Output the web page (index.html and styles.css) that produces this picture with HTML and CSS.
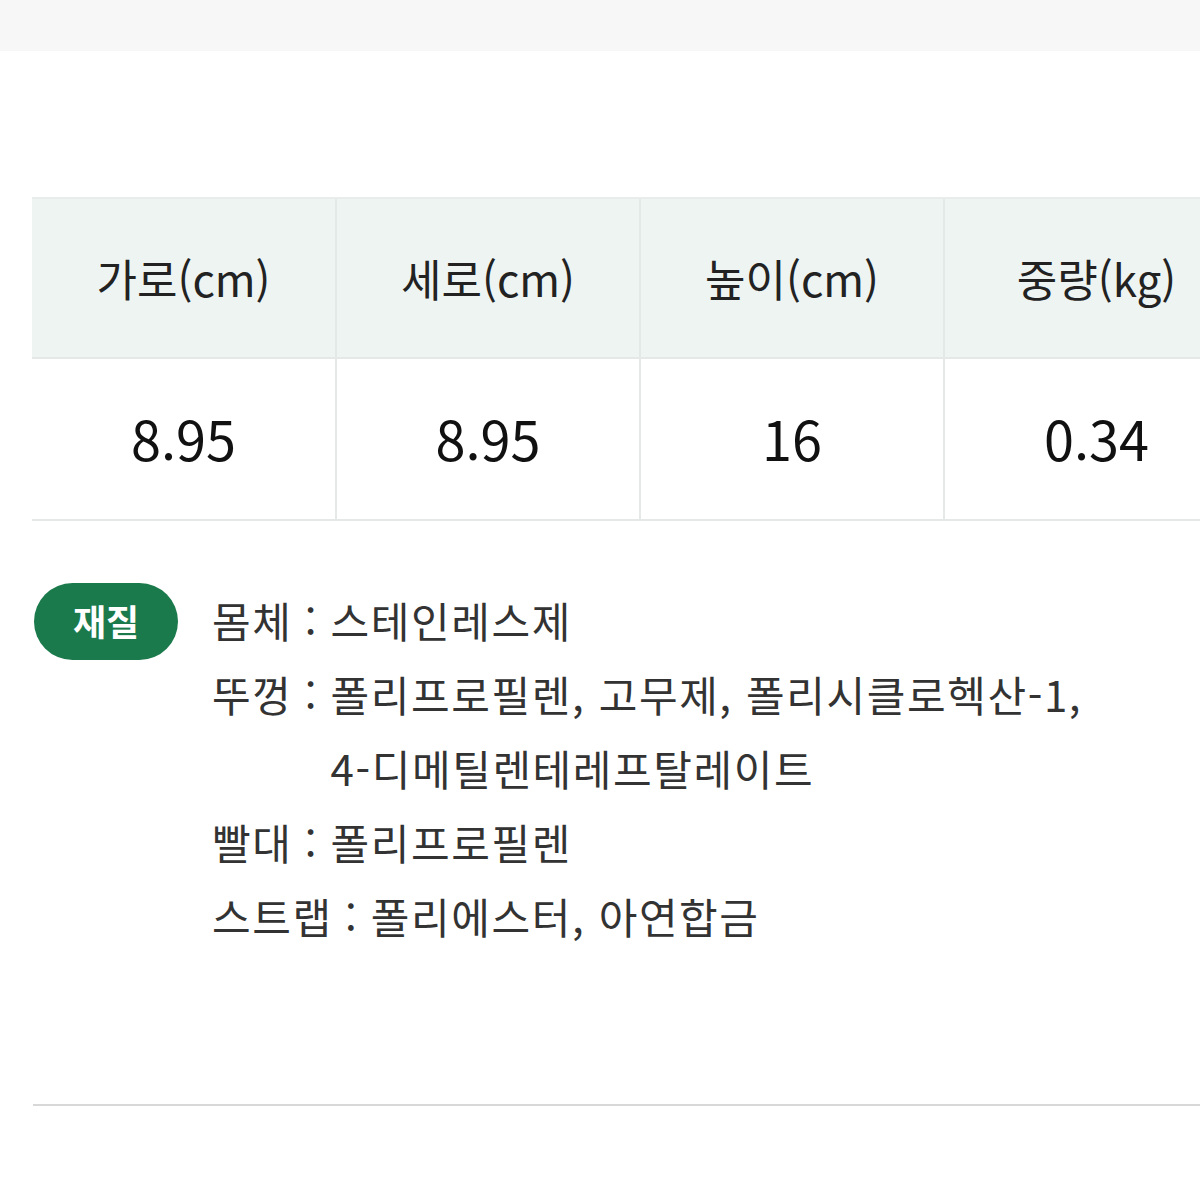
FILE: index.html
```html
<!doctype html>
<html lang="ko">
<head>
    <meta charset="UTF-8">
    <meta name="viewport" content="width=device-width, initial-scale=1.0">
    <title>제품 정보</title>
    <link rel="stylesheet" href="styles.css">
</head>
<body>

<div class="top_bar"></div>

<div class="spec">
    <table class="spec_table">
        <tr class="spec_head">
            <th>가로(cm)</th>
            <th>세로(cm)</th>
            <th>높이(cm)</th>
            <th>중량(kg)</th>
        </tr>
        <tr class="spec_body">
            <td>8.95</td>
            <td>8.95</td>
            <td>16</td>
            <td>0.34</td>
        </tr>
    </table>
</div>

<div class="material">
    <div class="material_badge">재질</div>
    <ul class="material_list">
        <li><span class="material_name">몸체 :&nbsp;</span><span>스테인레스제</span></li>
        <li><span class="material_name">뚜껑 :&nbsp;</span><span>폴리프로필렌, 고무제, 폴리시클로헥산-1,<br>4-디메틸렌테레프탈레이트</span></li>
        <li><span class="material_name">빨대 :&nbsp;</span><span>폴리프로필렌</span></li>
        <li><span class="material_name">스트랩 :&nbsp;</span><span>폴리에스터, 아연합금</span></li>
    </ul>
</div>

<hr class="bottom_line">

</body>
</html>
```

FILE: styles.css
```css
body {
    margin: 0;
    background: #fff;
    font-family: "Noto Sans CJK KR", "Noto Sans", sans-serif;
    color: #222;
    overflow: hidden;
}

.top_bar {
    height: 51px;
    background-color: #f7f7f7;
}

.spec {
    padding: 146px 0 0 32px;
}

.spec_table {
    width: 1216px;
    border-collapse: collapse;
    table-layout: fixed;
}
.spec_table th,
.spec_table td {
    text-align: center;
    border-left: 2px solid #e4e8e7;
    font-weight: 400;
    padding: 0;
}
.spec_table th:first-child,
.spec_table td:first-child {
    border-left: none;
}
.spec_head th {
    height: 158px;
    background-color: #eef4f2;
    font-size: 44px;
    color: #222;
    border-top: 2px solid #e8ecea;
    border-bottom: 2px solid #e4e8e7;
}
.spec_body td {
    height: 156px;
    font-size: 54px;
    color: #111;
    border-bottom: 2px solid #e4e8e7;
    padding-bottom: 4px;
}

.material {
    display: flex;
    align-items: flex-start;
    padding: 62px 0 0 34px;
}
.material_badge {
    width: 144px;
    height: 77px;
    border-radius: 39px;
    background-color: #1b7a4c;
    color: #fff;
    font-size: 36px;
    font-weight: 700;
    display: flex;
    align-items: center;
    justify-content: center;
    flex-shrink: 0;
    padding-bottom: 4px;
    box-sizing: border-box;
}
.material_list {
    list-style: none;
    margin: 0;
    padding: 0 0 0 34px;
    font-size: 42px;
    line-height: 74px;
    color: #333;
    letter-spacing: 1.6px;
    margin-top: 0;
}
.material_list li {
    display: flex;
}
.material_name {
    white-space: nowrap;
    word-spacing: -1px;
}

.bottom_line {
    margin: 151px 0 0 33px;
    border: none;
    height: 2px;
    background-color: #d8d8d8;
}
```
